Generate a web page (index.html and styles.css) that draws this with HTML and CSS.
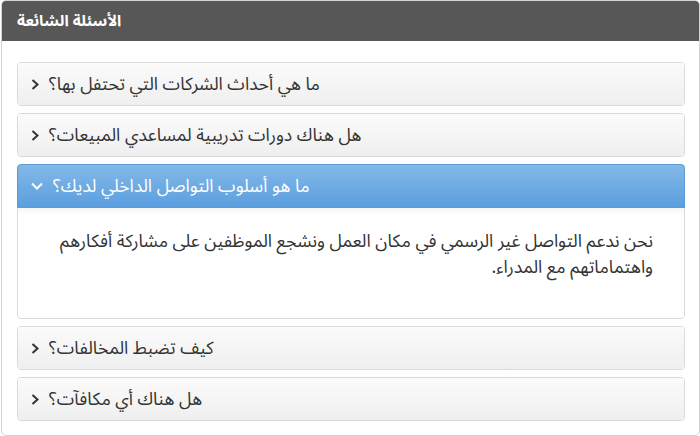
FILE: index.html
```html
<!doctype html>

<html lang="ar" dir="rtl">
<head>
  <meta charset="utf-8">
  <title>الأسئلة الشائعة</title>
  <meta name="viewport" content="width=device-width, initial-scale=1" />
  <link rel="stylesheet" href="styles.css">
</head>

<body>
  <div class="card">
    <h1 class="card-title">الأسئلة الشائعة</h1>

    <div class="faq">
      <div class="item">
        <div class="question"><span>ما هي أحداث الشركات التي تحتفل بها؟</span>
          <svg class="chev" viewBox="0 0 8 11"><path d="M1.5 1 L6.5 5.5 L1.5 10"/></svg></div>
      </div>

      <div class="item">
        <div class="question"><span>هل هناك دورات تدريبية لمساعدي المبيعات؟</span>
          <svg class="chev" viewBox="0 0 8 11"><path d="M1.5 1 L6.5 5.5 L1.5 10"/></svg></div>
      </div>

      <div class="item open">
        <div class="question"><span>ما هو أسلوب التواصل الداخلي لديك؟</span>
          <svg class="chev" viewBox="0 0 12 8"><path d="M1 1.5 L6 6.5 L11 1.5"/></svg></div>
        <div class="answer">
          <p>نحن ندعم التواصل غير الرسمي في مكان العمل ونشجع الموظفين على مشاركة أفكارهم واهتماماتهم مع المدراء.</p>
        </div>
      </div>

      <div class="item">
        <div class="question"><span>كيف تضبط المخالفات؟</span>
          <svg class="chev" viewBox="0 0 8 11"><path d="M1.5 1 L6.5 5.5 L1.5 10"/></svg></div>
      </div>

      <div class="item">
        <div class="question"><span>هل هناك أي مكافآت؟</span>
          <svg class="chev" viewBox="0 0 8 11"><path d="M1.5 1 L6.5 5.5 L1.5 10"/></svg></div>
      </div>
    </div>
  </div>
</body>
</html>
```

FILE: styles.css
```css
body {
  margin: 0;
  font-family: "Noto Sans Arabic", "Noto Sans", "DejaVu Sans", sans-serif;
  color: #333;
  background: white;
}

.card {
  width: 699px;
  height: 436px;
  box-sizing: border-box;
  border: solid 1px #d4d4d4;
  border-radius: 5px;
  overflow: hidden;
}

.card-title {
  margin: 0;
  height: 40px;
  padding: 0 15px;
  background: #575757;
  color: white;
  font-size: 15.5px;
  font-weight: bold;
  line-height: 40px;
  text-align: left;
}

.faq {
  display: flex;
  flex-direction: column;
  gap: 7px;
  padding: 21px 14px 13px 15px;
}

.item {
  border: solid 1px #dadada;
  border-radius: 4px;
  background: white;
}

.question {
  display: flex;
  justify-content: flex-end;
  align-items: center;
  gap: 10px;
  height: 42px;
  padding: 0 12px 0 13px;
  font-size: 17.7px;
  background: linear-gradient(#fbfbfb, #efefef);
  border-radius: 3px;
}

.chev {
  width: 8px;
  height: 11px;
  fill: none;
  stroke: #333;
  stroke-width: 2;
}

.open .question {
  margin: -1px -1px 0;
  background: linear-gradient(#83b8e8, #5b9fdf);
  color: white;
  border: solid 1px #5a9ad6;
  border-radius: 4px 4px 0 0;
}

.open .chev {
  width: 12px;
  height: 8px;
  stroke: white;
}

.answer {
  height: 110px;
  box-sizing: border-box;
  padding: 21px 31px 0 30px;
  box-shadow: inset 0 8px 10px -8px #00000014;
}

.answer p {
  margin: 0;
  font-size: 17.7px;
  line-height: 26px;
}
```
